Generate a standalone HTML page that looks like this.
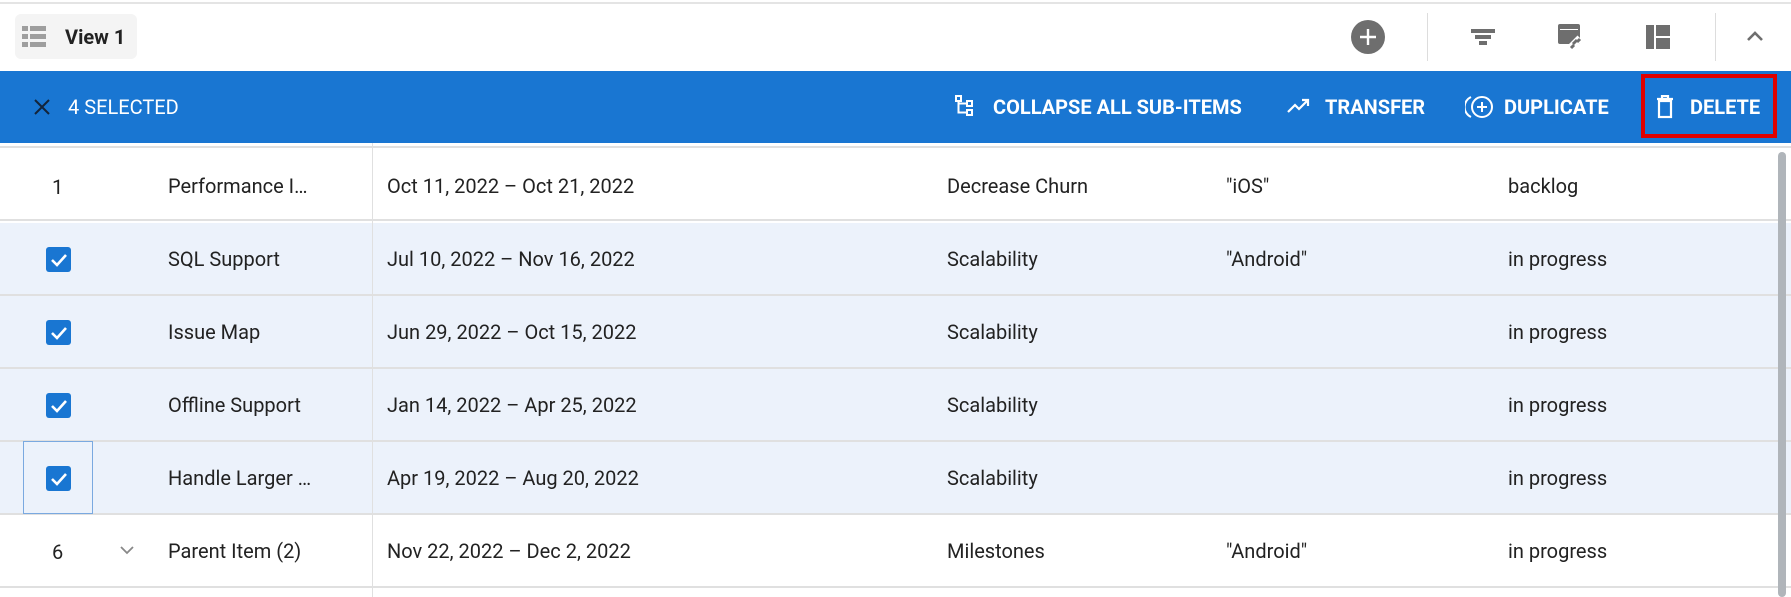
<!DOCTYPE html>
<html><head><meta charset="utf-8"><style>
*{margin:0;padding:0;box-sizing:border-box}
body{width:1791px;height:597px;background:#fff;font-family:Roboto,"Liberation Sans",sans-serif;position:relative;overflow:hidden;color:#222}
.a{position:absolute}
.t{position:absolute;font-size:20px;line-height:22px;white-space:nowrap;color:#222}
.row{position:absolute;left:0;width:1791px;height:73px;border-bottom:2px solid #e0e0e0}
.sel{background:#ecf2fb}
.cb{position:absolute;left:46px;width:25px;height:25px;background:#1976d2;border-radius:3px}
.bt{position:absolute;top:96px;color:#fff;font-weight:bold;font-size:20px;line-height:22px;white-space:nowrap}
</style></head><body>
<div class="a" style="left:0;top:2px;width:1791px;height:2px;background:#e4e4e4"></div>
<div class="a" style="left:15px;top:14px;width:122px;height:45px;background:#f4f4f4;border-radius:6px"></div>
<svg class="a" style="left:22px;top:26px" width="25" height="22" viewBox="0 0 25 22"><g fill="#9e9e9e"><rect x="0" y="0" width="6" height="5"/><rect x="8" y="0" width="16" height="5"/><rect x="0" y="8" width="6" height="5"/><rect x="8" y="8" width="16" height="5"/><rect x="0" y="16" width="6" height="5"/><rect x="8" y="16" width="16" height="5"/></g></svg>
<div class="t" style="left:65px;top:26px;font-weight:bold;font-size:20px">View 1</div>
<svg class="a" style="left:1351px;top:20px" width="34" height="34"><circle cx="17" cy="17" r="17" fill="#6e6e6e"/><path d="M17 9v16M9 17h16" stroke="#fff" stroke-width="2.4"/></svg>
<div class="a" style="left:1427px;top:13px;width:1px;height:48px;background:#ddd"></div>
<svg class="a" style="left:1471px;top:27px" width="24" height="20"><g fill="#6e6e6e"><rect x="0" y="2" width="24" height="4"/><rect x="4" y="8" width="16" height="4"/><rect x="8" y="14" width="8" height="4"/></g></svg>
<svg class="a" style="left:1558px;top:24px" width="28" height="28"><rect x="0" y="0" width="22" height="20" rx="2" fill="#6e6e6e"/><rect x="2" y="5" width="18" height="1" fill="#fff"/><path d="M12 24l10-10" stroke="#fff" stroke-width="7"/><path d="M13 24l3-3M19 18l3-3M15 20l4-4" stroke="#6e6e6e" stroke-width="3"/></svg>
<svg class="a" style="left:1646px;top:25px" width="24" height="24"><g fill="#6e6e6e"><rect x="0" y="0" width="8" height="24"/><rect x="10" y="0" width="14" height="11"/><rect x="10" y="13" width="14" height="11"/></g></svg>
<div class="a" style="left:1715px;top:13px;width:1px;height:48px;background:#ddd"></div>
<svg class="a" style="left:1746px;top:30px" width="18" height="12"><path d="M2 10l7-7 7 7" stroke="#6e6e6e" stroke-width="2.6" fill="none"/></svg>

<div class="a" style="left:0;top:71px;width:1791px;height:72px;background:#1976d2"></div>
<svg class="a" style="left:34px;top:99px" width="16" height="16"><path d="M1 1l14 14M15 1L1 15" stroke="#13243a" stroke-width="2"/></svg>
<div class="bt" style="left:68px;font-weight:normal">4 SELECTED</div>
<svg class="a" style="left:955px;top:95px" width="22" height="22" fill="none" stroke="#fff" stroke-width="2"><rect x="1" y="1" width="5" height="5"/><rect x="12" y="6" width="5" height="5"/><rect x="12" y="15" width="5" height="5"/><path d="M3.5 6v11.5h8.5M3.5 8.5h8.5"/></svg>
<div class="bt" style="left:993px">COLLAPSE ALL SUB-ITEMS</div>
<svg class="a" style="left:1287px;top:98px" width="24" height="16"><path d="M1 14l7-7 4 4 9-9M15 2h6v6" stroke="#fff" stroke-width="2.2" fill="none"/></svg>
<div class="bt" style="left:1325px">TRANSFER</div>
<svg class="a" style="left:1465px;top:94px" width="30" height="26" fill="none" stroke="#fff" stroke-width="2"><path d="M6 3a11 11 0 0 0 0 20"/><circle cx="17" cy="13" r="10"/><path d="M17 8v10M12 13h10"/></svg>
<div class="bt" style="left:1504px">DUPLICATE</div>
<div class="a" style="left:1641px;top:74px;width:136px;height:64px;border:4px solid #e00000"></div>
<svg class="a" style="left:1656px;top:95px" width="18" height="24" fill="none" stroke="#fff" stroke-width="2.2"><path d="M1 4h16M6 4V1h6v3"/><rect x="3" y="6" width="12" height="16"/></svg>
<div class="bt" style="left:1690px">DELETE</div>

<div class="a" style="left:0;top:143px;width:1791px;height:5px;background:#fff;border-bottom:2px solid #e0e0e0"></div>
<div class="row" style="top:148px"></div>
<div class="row sel" style="top:223px"></div>
<div class="row sel" style="top:296px"></div>
<div class="row sel" style="top:369px"></div>
<div class="row sel" style="top:442px"></div>
<div class="row" style="top:515px"></div>
<div class="a" style="left:372px;top:143px;width:1px;height:454px;background:#e0e0e0"></div>
<div class="a" style="left:23px;top:441px;width:70px;height:73px;border:1px solid #7aa9e0"></div>
<div class="a" style="left:1778px;top:152px;width:8px;height:445px;background:#b0b5ba;border-radius:4px"></div>

<div class="t" style="left:52px;top:176px">1</div>
<div class="t" style="left:52px;top:541px">6</div>
<svg class="a" style="left:120px;top:546px" width="14" height="9"><path d="M1 1l6 6 6-6" stroke="#888" stroke-width="1.8" fill="none"/></svg>
<svg class="cb" style="top:247px" viewBox="0 0 25 25"><path d="M6 13l5 5 9-10" stroke="#fff" stroke-width="2.6" fill="none"/></svg>
<svg class="cb" style="top:320px" viewBox="0 0 25 25"><path d="M6 13l5 5 9-10" stroke="#fff" stroke-width="2.6" fill="none"/></svg>
<svg class="cb" style="top:393px" viewBox="0 0 25 25"><path d="M6 13l5 5 9-10" stroke="#fff" stroke-width="2.6" fill="none"/></svg>
<svg class="cb" style="top:466px" viewBox="0 0 25 25"><path d="M6 13l5 5 9-10" stroke="#fff" stroke-width="2.6" fill="none"/></svg>

<div class="t" style="left:168px;top:175px">Performance I…</div>
<div class="t" style="left:387px;top:175px">Oct 11, 2022 – Oct 21, 2022</div>
<div class="t" style="left:947px;top:175px">Decrease Churn</div>
<div class="t" style="left:1226px;top:175px">"iOS"</div>
<div class="t" style="left:1508px;top:175px">backlog</div>

<div class="t" style="left:168px;top:248px">SQL Support</div>
<div class="t" style="left:387px;top:248px">Jul 10, 2022 – Nov 16, 2022</div>
<div class="t" style="left:947px;top:248px">Scalability</div>
<div class="t" style="left:1226px;top:248px">"Android"</div>
<div class="t" style="left:1508px;top:248px">in progress</div>

<div class="t" style="left:168px;top:321px">Issue Map</div>
<div class="t" style="left:387px;top:321px">Jun 29, 2022 – Oct 15, 2022</div>
<div class="t" style="left:947px;top:321px">Scalability</div>
<div class="t" style="left:1508px;top:321px">in progress</div>

<div class="t" style="left:168px;top:394px">Offline Support</div>
<div class="t" style="left:387px;top:394px">Jan 14, 2022 – Apr 25, 2022</div>
<div class="t" style="left:947px;top:394px">Scalability</div>
<div class="t" style="left:1508px;top:394px">in progress</div>

<div class="t" style="left:168px;top:467px">Handle Larger …</div>
<div class="t" style="left:387px;top:467px">Apr 19, 2022 – Aug 20, 2022</div>
<div class="t" style="left:947px;top:467px">Scalability</div>
<div class="t" style="left:1508px;top:467px">in progress</div>

<div class="t" style="left:168px;top:540px">Parent Item (2)</div>
<div class="t" style="left:387px;top:540px">Nov 22, 2022 – Dec 2, 2022</div>
<div class="t" style="left:947px;top:540px">Milestones</div>
<div class="t" style="left:1226px;top:540px">"Android"</div>
<div class="t" style="left:1508px;top:540px">in progress</div>
</body></html>
